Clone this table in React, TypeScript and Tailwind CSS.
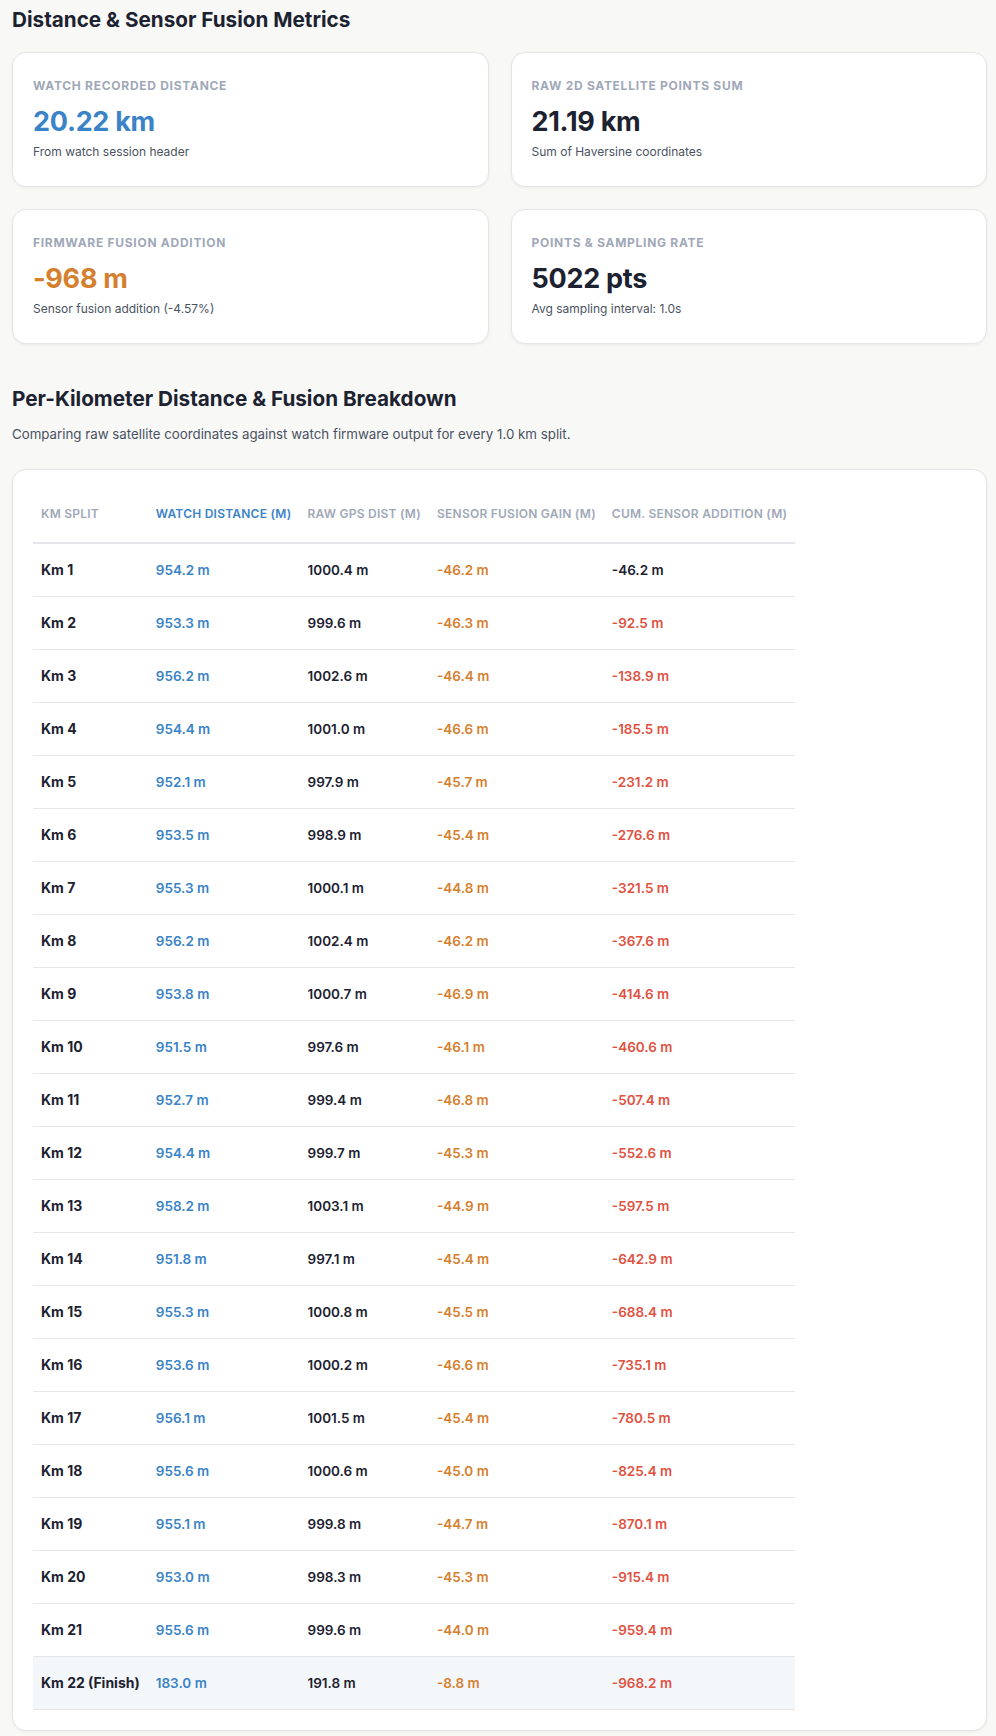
import React from "react";

type Row = { km: string; watch: string; raw: string; gain: string; cum: string };

const rows: Row[] = [
  { km: "Km 1", watch: "954.2 m", raw: "1000.4 m", gain: "-46.2 m", cum: "-46.2 m" },
  { km: "Km 2", watch: "953.3 m", raw: "999.6 m", gain: "-46.3 m", cum: "-92.5 m" },
  { km: "Km 3", watch: "956.2 m", raw: "1002.6 m", gain: "-46.4 m", cum: "-138.9 m" },
  { km: "Km 4", watch: "954.4 m", raw: "1001.0 m", gain: "-46.6 m", cum: "-185.5 m" },
  { km: "Km 5", watch: "952.1 m", raw: "997.9 m", gain: "-45.7 m", cum: "-231.2 m" },
  { km: "Km 6", watch: "953.5 m", raw: "998.9 m", gain: "-45.4 m", cum: "-276.6 m" },
  { km: "Km 7", watch: "955.3 m", raw: "1000.1 m", gain: "-44.8 m", cum: "-321.5 m" },
  { km: "Km 8", watch: "956.2 m", raw: "1002.4 m", gain: "-46.2 m", cum: "-367.6 m" },
  { km: "Km 9", watch: "953.8 m", raw: "1000.7 m", gain: "-46.9 m", cum: "-414.6 m" },
  { km: "Km 10", watch: "951.5 m", raw: "997.6 m", gain: "-46.1 m", cum: "-460.6 m" },
  { km: "Km 11", watch: "952.7 m", raw: "999.4 m", gain: "-46.8 m", cum: "-507.4 m" },
  { km: "Km 12", watch: "954.4 m", raw: "999.7 m", gain: "-45.3 m", cum: "-552.6 m" },
  { km: "Km 13", watch: "958.2 m", raw: "1003.1 m", gain: "-44.9 m", cum: "-597.5 m" },
  { km: "Km 14", watch: "951.8 m", raw: "997.1 m", gain: "-45.4 m", cum: "-642.9 m" },
  { km: "Km 15", watch: "955.3 m", raw: "1000.8 m", gain: "-45.5 m", cum: "-688.4 m" },
  { km: "Km 16", watch: "953.6 m", raw: "1000.2 m", gain: "-46.6 m", cum: "-735.1 m" },
  { km: "Km 17", watch: "956.1 m", raw: "1001.5 m", gain: "-45.4 m", cum: "-780.5 m" },
  { km: "Km 18", watch: "955.6 m", raw: "1000.6 m", gain: "-45.0 m", cum: "-825.4 m" },
  { km: "Km 19", watch: "955.1 m", raw: "999.8 m", gain: "-44.7 m", cum: "-870.1 m" },
  { km: "Km 20", watch: "953.0 m", raw: "998.3 m", gain: "-45.3 m", cum: "-915.4 m" },
  { km: "Km 21", watch: "955.6 m", raw: "999.6 m", gain: "-44.0 m", cum: "-959.4 m" },
  { km: "Km 22 (Finish)", watch: "183.0 m", raw: "191.8 m", gain: "-8.8 m", cum: "-968.2 m" },
];

function MetricCard({
  label,
  value,
  sub,
  valueClass,
}: {
  label: string;
  value: string;
  sub: string;
  valueClass: string;
}) {
  return (
    <div className="rounded-[14px] border border-[#e6e6e9] bg-white px-5 py-6 shadow-[0_1px_3px_rgba(0,0,0,0.06)]">
      <div className="text-[12px] font-bold uppercase leading-[18px] tracking-[0.06em] text-[#a0a8b8]">
        {label}
      </div>
      <div className={`mt-2.5 text-[27px] font-bold leading-[34px] tracking-[-0.01em] ${valueClass}`}>
        {value}
      </div>
      <div className="mt-[3px] text-[12px] leading-5 text-[#4a5261]">{sub}</div>
    </div>
  );
}

const th = "px-2 pb-5 pt-4 text-[12px] font-semibold uppercase leading-4 tracking-[0.02em]";
const td = "whitespace-nowrap px-2 py-4 text-[13.5px] font-semibold leading-5";

export default function App() {
  return (
    <div className="min-h-[1736px] bg-[#f8f8f7] pb-2 pl-3 pr-[9px] pt-[6px] font-['Inter',sans-serif] text-[#1c2230]">
      <h2 className="text-[20.7px] font-bold leading-7 text-[#1c2230]">Distance &amp; Sensor Fusion Metrics</h2>
      <div className="mt-[18px] grid grid-cols-2 gap-[22px]">
        <MetricCard
          label="Watch Recorded Distance"
          value="20.22 km"
          sub="From watch session header"
          valueClass="text-[#3a83c6]"
        />
        <MetricCard
          label="Raw 2D Satellite Points Sum"
          value="21.19 km"
          sub="Sum of Haversine coordinates"
          valueClass="text-[#1c2230]"
        />
        <MetricCard
          label="Firmware Fusion Addition"
          value="-968 m"
          sub="Sensor fusion addition (-4.57%)"
          valueClass="text-[#d5802e]"
        />
        <MetricCard
          label="Points & Sampling Rate"
          value="5022 pts"
          sub="Avg sampling interval: 1.0s"
          valueClass="text-[#1c2230]"
        />
      </div>

      <h2 className="mt-[41px] text-[20.7px] font-bold leading-7 text-[#1c2230]">
        Per-Kilometer Distance &amp; Fusion Breakdown
      </h2>
      <p className="mt-[11px] text-[13.3px] leading-5 text-[#4a5261]">
        Comparing raw satellite coordinates against watch firmware output for every 1.0 km split.
      </p>

      <div className="mt-[25px] rounded-[14px] border border-[#e6e6e9] bg-white p-5 shadow-[0_1px_3px_rgba(0,0,0,0.06)]">
        <table className="border-collapse text-left">
          <thead>
            <tr className="border-b-2 border-[#e5e7ed]">
              <th className={`${th} text-[#a0a8b8]`}>Km Split</th>
              <th className={`${th} text-[#3a83c6]`}>Watch Distance (m)</th>
              <th className={`${th} text-[#a0a8b8]`}>Raw GPS Dist (m)</th>
              <th className={`${th} text-[#a0a8b8]`}>Sensor Fusion Gain (m)</th>
              <th className={`${th} text-[#a0a8b8]`}>Cum. Sensor Addition (m)</th>
            </tr>
          </thead>
          <tbody>
            {rows.map((r, i) => {
              const last = i === rows.length - 1;
              return (
                <tr key={r.km} className={`border-b border-[#e6e7eb] ${last ? "bg-[#f4f7fa]" : ""}`}>
                  <td className="whitespace-nowrap px-2 py-4 text-[14px] font-bold leading-5 text-[#1c2230]">
                    {r.km}
                  </td>
                  <td className={`${td} text-[#3a83c6]`}>{r.watch}</td>
                  <td className={`${td} text-[#1c2230]`}>{r.raw}</td>
                  <td className={`${td} text-[#d5802e]`}>{r.gain}</td>
                  <td className={`${td} ${i === 0 ? "text-[#1c2230]" : "text-[#e0523f]"}`}>{r.cum}</td>
                </tr>
              );
            })}
          </tbody>
        </table>
      </div>
    </div>
  );
}
